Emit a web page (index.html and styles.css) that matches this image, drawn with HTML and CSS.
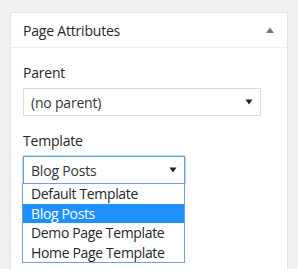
FILE: index.html
```html
<!DOCTYPE html>
<html>
<head>
<meta charset="utf-8">
<link rel="stylesheet" href="styles.css">
</head>
<body>
<div class="panel">
  <div class="panel-head">
    <h2 class="panel-title">Page Attributes</h2>
    <svg class="toggle" width="10" height="8" viewBox="0 0 10 8"><path d="M1 7 L5 1.5 L9 7 Z" fill="#72777c"/></svg>
  </div>
  <div class="panel-body">
    <p class="field-label">Parent</p>
    <div class="select select-wide">
      <span class="select-value">(no parent)</span>
      <svg class="caret" width="8" height="6" viewBox="0 0 8 6"><path d="M0.5 0.5 H7.5 L4 5.5 Z" fill="#222"/></svg>
    </div>
    <p class="field-label">Template</p>
    <div class="select-wrap">
      <div class="select select-focus">
        <span class="select-value">Blog Posts</span>
        <svg class="caret" width="8" height="6" viewBox="0 0 8 6"><path d="M0.5 0.5 H7.5 L4 5.5 Z" fill="#222"/></svg>
      </div>
      <ul class="options">
        <li class="option">Default Template</li>
        <li class="option option-active">Blog Posts</li>
        <li class="option">Demo Page Template</li>
        <li class="option">Home Page Template</li>
      </ul>
    </div>
  </div>
</div>
</body>
</html>
```
FILE: styles.css
```css
html, body {
  margin: 0;
  padding: 0;
  background: #f1f1f1;
  font-family: "Open Sans", "Noto Sans", sans-serif;
  color: #23282d;
}
body {
  padding: 12px 10px 0 10px;
  height: 269px;
  box-sizing: border-box;
  overflow: hidden;
}
.panel {
  box-sizing: border-box;
  background: #fff;
  border: 1px solid #e5e5e5;
  border-bottom: 0;
  box-shadow: 0 1px 1px rgba(0,0,0,0.04);
  height: 100%;
}
.panel-head {
  display: flex;
  align-items: center;
  justify-content: space-between;
  height: 34px;
  border-bottom: 1px solid #eeeeee;
  padding: 0 12px;
}
.panel-title {
  margin: 0;
  font-size: 14px;
  font-weight: 400;
  letter-spacing: -0.2px;
}
.panel-body {
  padding: 0 12px;
  display: flex;
  flex-direction: column;
  align-items: flex-start;
}
.field-label {
  margin: 15px 0 5px 0;
  font-size: 14px;
  line-height: 20px;
  letter-spacing: -0.2px;
}
.select {
  box-sizing: border-box;
  display: flex;
  align-items: center;
  justify-content: space-between;
  height: 28px;
  border: 1px solid #dddddd;
  padding: 0 7px 0 7px;
  font-size: 14px;
  color: #32373c;
  letter-spacing: -0.2px;
  background: #fff;
}
.select-wide {
  width: 238px;
}
.select-wrap {
  position: relative;
  width: 162px;
}
.select-focus {
  width: 162px;
  height: 28px;
  border-color: #5b9dd9;
  box-shadow: 0 0 2px rgba(30,140,190,0.8);
}
.options {
  position: absolute;
  left: -1px;
  top: 27px;
  width: 163px;
  box-sizing: border-box;
  margin: 0;
  padding: 0;
  list-style: none;
  border: 1px solid #7a9cd3;
  background: #fff;
}
.option {
  height: 19.5px;
  line-height: 19px;
  padding-left: 8px;
  font-size: 14px;
  color: #23282d;
  letter-spacing: -0.35px;
}
.option-active {
  background: #1e90ff;
  color: #fff;
}
```
